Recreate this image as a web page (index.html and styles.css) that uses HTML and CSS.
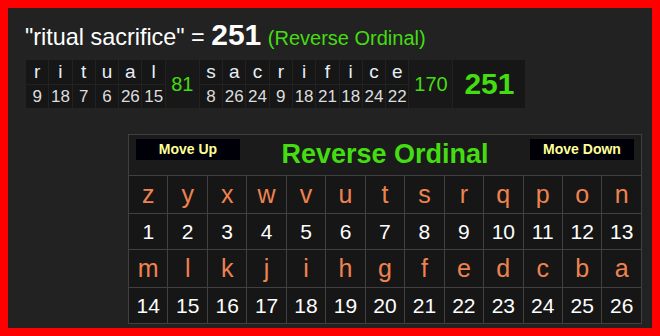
FILE: index.html
```html
<!DOCTYPE html>
<html>
<head>
<meta charset="utf-8">
<link rel="stylesheet" href="styles.css">
</head>
<body>
<div class="frame">
  <div class="title">"ritual sacrifice" = <b class="total">251</b> <span class="cipher">(Reverse Ordinal)</span></div>
  <table class="breakdown">
    <tr>
      <td class="l">r</td><td class="l">i</td><td class="l">t</td><td class="l">u</td><td class="l">a</td><td class="l">l</td>
      <td class="sum" rowspan="2">81</td>
      <td class="l">s</td><td class="l">a</td><td class="l">c</td><td class="l">r</td><td class="l">i</td><td class="l">f</td><td class="l">i</td><td class="l">c</td><td class="l">e</td>
      <td class="sum sum2" rowspan="2">170</td>
      <td class="grand" rowspan="2">251</td>
    </tr>
    <tr>
      <td class="n">9</td><td class="n">18</td><td class="n">7</td><td class="n">6</td><td class="n">26</td><td class="n">15</td>
      <td class="n">8</td><td class="n">26</td><td class="n">24</td><td class="n">9</td><td class="n">18</td><td class="n">21</td><td class="n">18</td><td class="n">24</td><td class="n">22</td>
    </tr>
  </table>
  <table class="chart">
    <tr>
      <td class="head" colspan="13">
        <div class="headbar">
          <span class="btn">Move Up</span>
          <span class="chart-title">Reverse Ordinal</span>
          <span class="btn">Move Down</span>
        </div>
      </td>
    </tr>
    <tr class="letters">
      <td>z</td><td>y</td><td>x</td><td>w</td><td>v</td><td>u</td><td>t</td><td>s</td><td>r</td><td>q</td><td>p</td><td>o</td><td>n</td>
    </tr>
    <tr class="nums">
      <td>1</td><td>2</td><td>3</td><td>4</td><td>5</td><td>6</td><td>7</td><td>8</td><td>9</td><td>10</td><td>11</td><td>12</td><td>13</td>
    </tr>
    <tr class="letters">
      <td>m</td><td>l</td><td>k</td><td>j</td><td>i</td><td>h</td><td>g</td><td>f</td><td>e</td><td>d</td><td>c</td><td>b</td><td>a</td>
    </tr>
    <tr class="nums">
      <td>14</td><td>15</td><td>16</td><td>17</td><td>18</td><td>19</td><td>20</td><td>21</td><td>22</td><td>23</td><td>24</td><td>25</td><td>26</td>
    </tr>
  </table>
</div>
</body>
</html>
```

FILE: styles.css
```css
html, body {
  margin: 0;
  padding: 0;
  background: #ff0000;
}
body {
  width: 660px;
  height: 336px;
  overflow: hidden;
  font-family: "Liberation Sans", Arial, sans-serif;
}
.frame {
  box-sizing: border-box;
  width: 660px;
  height: 336px;
  border: 8px solid #ff0000;
  background: #222222;
  padding: 14px 0 0 17px;
}
.title {
  color: #ffffff;
  font-size: 23.4px;
  line-height: 26px;
  height: 26px;
  white-space: nowrap;
}
.title .total {
  font-size: 30px;
  font-weight: bold;
}
.title .cipher {
  color: #44dd11;
  font-size: 20px;
}
.breakdown {
  border-collapse: collapse;
  margin-top: 11px;
}
.breakdown td {
  background: #161616;
  border: 1px solid #222222;
  text-align: center;
  padding: 0 1px;
  width: 20.3px;
}
.breakdown td.l {
  color: #e6eef8;
  font-size: 19px;
  height: 24px;
  line-height: 24px;
}
.breakdown td.n {
  color: #dddddd;
  font-size: 17px;
  height: 23px;
  line-height: 23px;
}
.breakdown td.sum {
  color: #44dd11;
  font-size: 20px;
  width: 31px;
  background: #181818;
}
.breakdown td.sum2 {
  width: 41px;
}
.breakdown td.grand {
  color: #44dd11;
  font-size: 30px;
  font-weight: bold;
  width: 70px;
}
.chart {
  border-collapse: collapse;
  table-layout: fixed;
  width: 514px;
  margin: 25px 0 0 103px;
  background: #161616;
}
.chart td {
  border: 1px solid #404040;
  text-align: center;
  padding: 0;
  font-size: 21px;
}
.chart td.head {
  height: 40px;
  background: #1b1b1b;
  padding: 0 7px;
  vertical-align: top;
}
.headbar {
  display: flex;
  justify-content: space-between;
  align-items: flex-start;
  padding-top: 4px;
}
.btn {
  width: 104px;
  height: 21px;
  line-height: 21px;
  background: #000008;
  color: #ffff99;
  font-size: 14px;
  font-weight: bold;
  text-align: center;
}
.chart-title {
  color: #44dd11;
  font-size: 27px;
  font-weight: bold;
  line-height: 30px;
}
.letters td {
  color: #ee8350;
  height: 37px;
  font-size: 25px;
}
.nums td {
  color: #ffffff;
  height: 35px;
}
```
